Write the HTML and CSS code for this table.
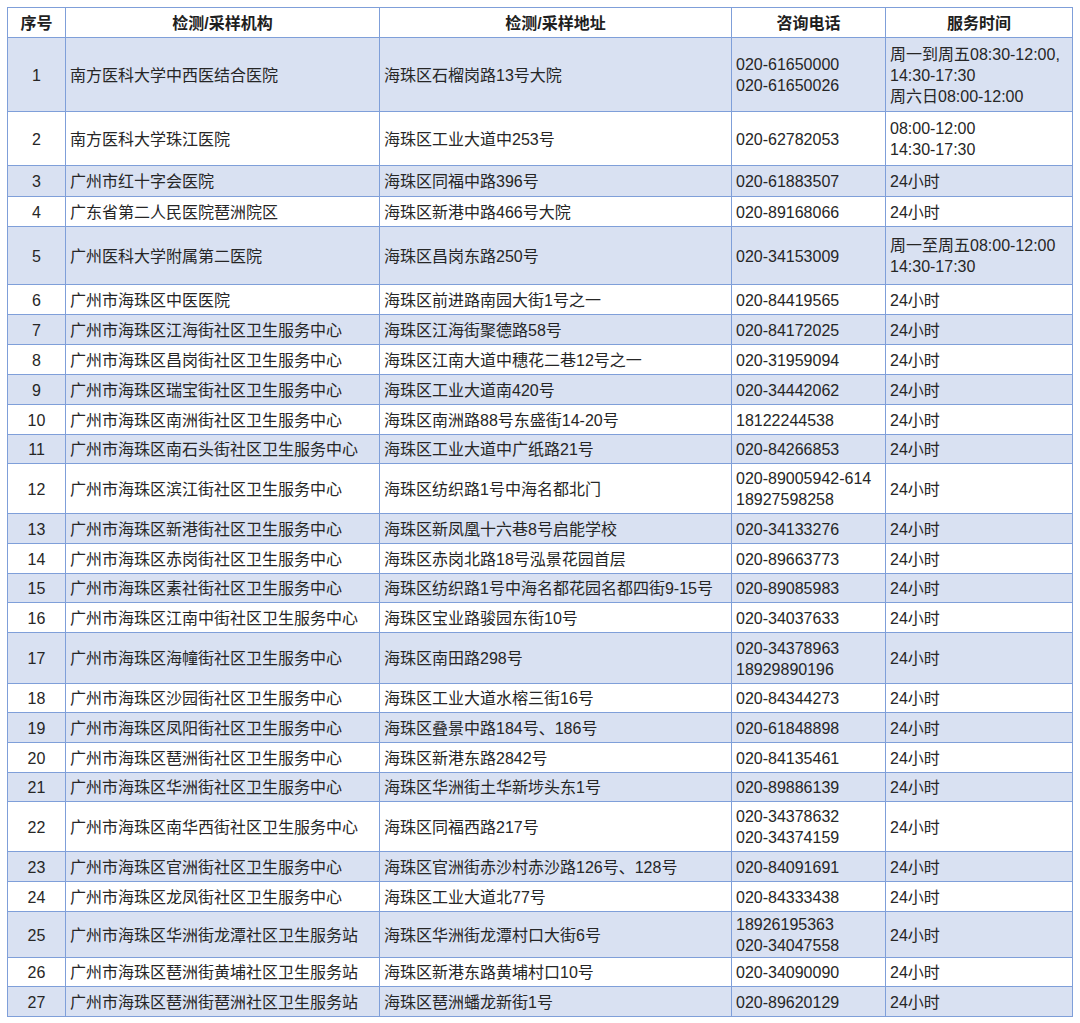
FILE: index.html
```html
<!DOCTYPE html>
<html lang="zh-CN">
<head>
<meta charset="utf-8">
<title>检测/采样机构</title>
<link rel="stylesheet" href="styles.css">
</head>
<body>
<table class="sites">
<colgroup>
<col class="c-no"><col class="c-org"><col class="c-addr"><col class="c-tel"><col class="c-time">
</colgroup>
<thead>
<tr class="head"><th>序号</th><th>检测/采样机构</th><th>检测/采样地址</th><th>咨询电话</th><th>服务时间</th></tr>
</thead>
<tbody>
<tr class="alt h74"><td class="no">1</td><td>南方医科大学中西医结合医院</td><td>海珠区石榴岗路13号大院</td><td>020-61650000<br>020-61650026</td><td>周一到周五08:30-12:00,<br>14:30-17:30<br>周六日08:00-12:00</td></tr>
<tr class="h54"><td class="no">2</td><td>南方医科大学珠江医院</td><td>海珠区工业大道中253号</td><td>020-62782053</td><td>08:00-12:00<br>14:30-17:30</td></tr>
<tr class="alt h31"><td class="no">3</td><td>广州市红十字会医院</td><td>海珠区同福中路396号</td><td>020-61883507</td><td>24小时</td></tr>
<tr><td class="no">4</td><td>广东省第二人民医院琶洲院区</td><td>海珠区新港中路466号大院</td><td>020-89168066</td><td>24小时</td></tr>
<tr class="alt h58"><td class="no">5</td><td>广州医科大学附属第二医院</td><td>海珠区昌岗东路250号</td><td>020-34153009</td><td>周一至周五08:00-12:00<br>14:30-17:30</td></tr>
<tr><td class="no">6</td><td>广州市海珠区中医医院</td><td>海珠区前进路南园大街1号之一</td><td>020-84419565</td><td>24小时</td></tr>
<tr class="alt"><td class="no">7</td><td>广州市海珠区江海街社区卫生服务中心</td><td>海珠区江海街聚德路58号</td><td>020-84172025</td><td>24小时</td></tr>
<tr><td class="no">8</td><td>广州市海珠区昌岗街社区卫生服务中心</td><td>海珠区江南大道中穗花二巷12号之一</td><td>020-31959094</td><td>24小时</td></tr>
<tr class="alt"><td class="no">9</td><td>广州市海珠区瑞宝街社区卫生服务中心</td><td>海珠区工业大道南420号</td><td>020-34442062</td><td>24小时</td></tr>
<tr><td class="no">10</td><td>广州市海珠区南洲街社区卫生服务中心</td><td>海珠区南洲路88号东盛街14-20号</td><td>18122244538</td><td>24小时</td></tr>
<tr class="alt h29"><td class="no">11</td><td>广州市海珠区南石头街社区卫生服务中心</td><td>海珠区工业大道中广纸路21号</td><td>020-84266853</td><td>24小时</td></tr>
<tr class="h50"><td class="no">12</td><td>广州市海珠区滨江街社区卫生服务中心</td><td>海珠区纺织路1号中海名都北门</td><td>020-89005942-614<br>18927598258</td><td>24小时</td></tr>
<tr class="alt"><td class="no">13</td><td>广州市海珠区新港街社区卫生服务中心</td><td>海珠区新凤凰十六巷8号启能学校</td><td>020-34133276</td><td>24小时</td></tr>
<tr><td class="no">14</td><td>广州市海珠区赤岗街社区卫生服务中心</td><td>海珠区赤岗北路18号泓景花园首层</td><td>020-89663773</td><td>24小时</td></tr>
<tr class="alt h29"><td class="no">15</td><td>广州市海珠区素社街社区卫生服务中心</td><td>海珠区纺织路1号中海名都花园名都四街9-15号</td><td>020-89085983</td><td>24小时</td></tr>
<tr><td class="no">16</td><td>广州市海珠区江南中街社区卫生服务中心</td><td>海珠区宝业路骏园东街10号</td><td>020-34037633</td><td>24小时</td></tr>
<tr class="alt h51"><td class="no">17</td><td>广州市海珠区海幢街社区卫生服务中心</td><td>海珠区南田路298号</td><td>020-34378963<br>18929890196</td><td>24小时</td></tr>
<tr class="h29"><td class="no">18</td><td>广州市海珠区沙园街社区卫生服务中心</td><td>海珠区工业大道水榕三街16号</td><td>020-84344273</td><td>24小时</td></tr>
<tr class="alt"><td class="no">19</td><td>广州市海珠区凤阳街社区卫生服务中心</td><td>海珠区叠景中路184号、186号</td><td>020-61848898</td><td>24小时</td></tr>
<tr><td class="no">20</td><td>广州市海珠区琶洲街社区卫生服务中心</td><td>海珠区新港东路2842号</td><td>020-84135461</td><td>24小时</td></tr>
<tr class="alt h29"><td class="no">21</td><td>广州市海珠区华洲街社区卫生服务中心</td><td>海珠区华洲街土华新埗头东1号</td><td>020-89886139</td><td>24小时</td></tr>
<tr class="h50"><td class="no">22</td><td>广州市海珠区南华西街社区卫生服务中心</td><td>海珠区同福西路217号</td><td>020-34378632<br>020-34374159</td><td>24小时</td></tr>
<tr class="alt"><td class="no">23</td><td>广州市海珠区官洲街社区卫生服务中心</td><td>海珠区官洲街赤沙村赤沙路126号、128号</td><td>020-84091691</td><td>24小时</td></tr>
<tr><td class="no">24</td><td>广州市海珠区龙凤街社区卫生服务中心</td><td>海珠区工业大道北77号</td><td>020-84333438</td><td>24小时</td></tr>
<tr class="alt h46"><td class="no">25</td><td>广州市海珠区华洲街龙潭社区卫生服务站</td><td>海珠区华洲街龙潭村口大街6号</td><td>18926195363<br>020-34047558</td><td>24小时</td></tr>
<tr class="h29"><td class="no">26</td><td>广州市海珠区琶洲街黄埔社区卫生服务站</td><td>海珠区新港东路黄埔村口10号</td><td>020-34090090</td><td>24小时</td></tr>
<tr class="alt"><td class="no">27</td><td>广州市海珠区琶洲街琶洲社区卫生服务站</td><td>海珠区琶洲蟠龙新街1号</td><td>020-89620129</td><td>24小时</td></tr>
</tbody>
</table>
</body>
</html>
```

FILE: styles.css
```css
html, body {
  margin: 0;
  padding: 0;
  background: #ffffff;
}
body {
  padding: 7px 0 0 7px;
  font-family: "Liberation Sans", "Noto Sans CJK SC", sans-serif;
  font-size: 16px;
  color: #262626;
}
.sites {
  border-collapse: collapse;
  table-layout: fixed;
  width: 1065px;
}
.c-no { width: 58px; }
.c-org { width: 314px; }
.c-addr { width: 352px; }
.c-tel { width: 154px; }
.c-time { width: 187px; }
.sites th, .sites td {
  border: 1px solid #7f9fd9;
  padding: 1px 4px 0 4px;
  line-height: 21px;
  vertical-align: middle;
  text-align: left;
  white-space: nowrap;
  overflow: hidden;
}
.sites th {
  text-align: center;
  font-weight: bold;
  color: #1f1f1f;
}
.sites td.no { text-align: center; }
.head { height: 30px; }
.sites tr { height: 30px; }
.sites tr.alt { background: #d9e1f2; }
.sites tr.h74 { height: 74px; }
.sites tr.h54 { height: 54px; }
.sites tr.h58 { height: 58px; }
.sites tr.h51 { height: 51px; }
.sites tr.h50 { height: 50px; }
.sites tr.h46 { height: 46px; }
.sites tr.h31 { height: 31px; }
.sites tr.h29 { height: 29px; }
```
